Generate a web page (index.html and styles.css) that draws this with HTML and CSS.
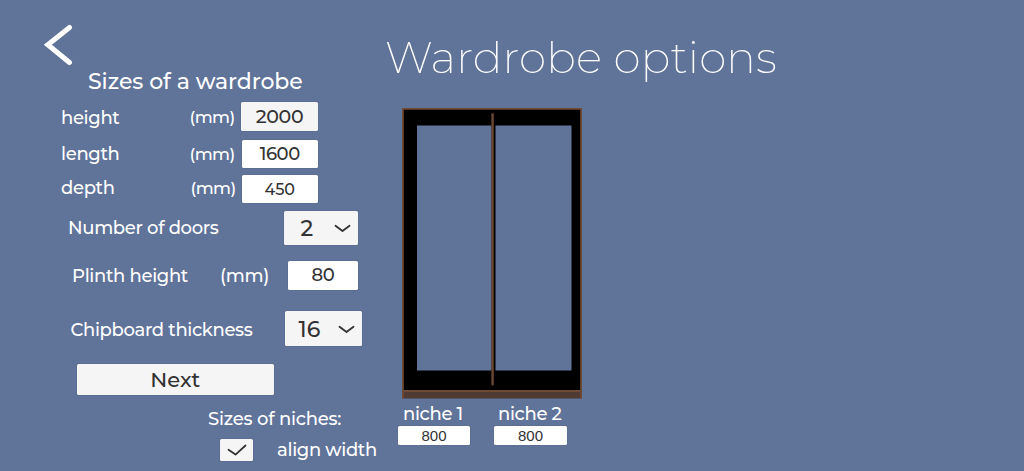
FILE: index.html
```html
<!DOCTYPE html>
<html lang="en">
<head>
    <meta charset="UTF-8">
    <meta name="viewport" content="width=device-width, initial-scale=1.0">
    <title>Wardrobe options</title>
    <link rel="stylesheet" href="styles.css">
</head>
<body>
    <form class="panel">
        <a href="#" class="back" aria-label="Back">
            <svg width="30" height="42" viewBox="0 0 30 42">
                <path d="M26.5 3.5 4.8 20.7 26.5 38.5" fill="none" stroke="#fff" stroke-width="5" stroke-linecap="round"/>
            </svg>
        </a>
        <h2>Sizes of a wardrobe</h2>

        <div class="row row-height">
            <label for="height">height</label>
            <span class="unit">(mm)</span>
            <input id="height" type="text" value="2000">
        </div>
        <div class="row row-length">
            <label for="length">length</label>
            <span class="unit">(mm)</span>
            <input id="length" type="text" value="1600">
        </div>
        <div class="row row-depth">
            <label for="depth">depth</label>
            <span class="unit">(mm)</span>
            <input id="depth" type="text" value="450">
        </div>
        <div class="row row-doors">
            <label>Number of doors</label>
            <button type="button" class="dropdown">
                <span>2</span>
                <svg width="17" height="9" viewBox="0 0 17 9"><path d="M1.5 1.8 8.5 7 15.5 1.8" /></svg>
            </button>
        </div>
        <div class="row row-plinth">
            <label for="plinth">Plinth height</label>
            <span class="unit">(mm)</span>
            <input id="plinth" type="text" value="80">
        </div>
        <div class="row row-chipboard">
            <label>Chipboard thickness</label>
            <button type="button" class="dropdown">
                <span>16</span>
                <svg width="17" height="9" viewBox="0 0 17 9"><path d="M1.5 1.8 8.5 7 15.5 1.8" /></svg>
            </button>
        </div>

        <button type="button" class="next">Next</button>

        <h3>Sizes of niches:</h3>
        <div class="align">
            <button type="button" class="checkbox" aria-label="align width">
                <svg width="20" height="12" viewBox="0 0 20 12"><path d="M1.5 5.8 8.5 10.6 18.5 1.5" /></svg>
            </button>
            <span>align width</span>
        </div>
    </form>

    <main>
        <h1>Wardrobe options</h1>
        <svg class="wardrobe" width="180" height="291" viewBox="0 0 180 291">
            <rect class="inside" x="0" y="0" width="180" height="284" />
            <!-- niches -->
            <rect class="niche-back" x="15" y="17.5" width="74.5" height="245" />
            <rect class="niche-back" x="93.5" y="17.5" width="76" height="245" />
            <!-- partition, plinth and outer boards -->
            <rect class="board" x="89.4" y="5.3" width="2.3" height="272" />
            <rect class="plinth" x="1" y="283" width="178" height="7.5" />
            <path class="board" d="M0 0H180V290.5H178.2V284H1.8V290.5H0ZM1.8 1.8V282H178.2V1.8Z" fill-rule="evenodd" />
        </svg>
        <div class="niches">
            <div class="niche">
                <label for="niche1">niche 1</label>
                <input id="niche1" type="text" value="800">
            </div>
            <div class="niche niche-wide">
                <label for="niche2">niche 2</label>
                <input id="niche2" type="text" value="800">
            </div>
        </div>
    </main>
</body>
</html>
```
FILE: styles.css
```css
* {
    margin: 0;
    padding: 0;
    box-sizing: border-box;
}

body {
    display: flex;
    height: 471px;
    overflow: hidden;
    background: #607399;
    color: #fff;
    font-family: 'Montserrat', 'Inter', sans-serif;
    font-size: 18px;
    font-weight: 500;
    letter-spacing: -0.33px;
}

.panel {
    width: 386px;
    display: flex;
    flex-direction: column;
}

.back {
    display: block;
    height: 42px;
    margin: 24px 0 0 43px;
}

h2 {
    height: 30px;
    margin-left: 88px;
    font-size: 22px;
    font-weight: 500;
    line-height: 32px;
    white-space: nowrap;
    letter-spacing: -0.05px;
}

h3 {
    height: 24px;
    margin: 11.5px 0 0 208px;
    font-size: 18px;
    font-weight: 500;
    line-height: 24px;
    letter-spacing: -0.22px;
}

.row {
    display: flex;
    align-items: center;
    flex-shrink: 0;
    white-space: nowrap;
}

input,
button {
    border: none;
    border-radius: 1.5px;
    background: #fff;
    color: #323232;
    font-family: inherit;
    font-weight: 500;
    text-align: center;
    box-shadow: 0 0 1px rgba(40, 40, 50, 0.6);
}

button {
    background: #f5f5f5;
}

button path {
    fill: none;
    stroke: #323232;
    stroke-width: 1.8;
    stroke-linecap: round;
    stroke-linejoin: round;
}

.row-height,
.row-length,
.row-depth {
    padding-left: 61px;
}

.row-height label,
.row-length label,
.row-depth label {
    width: 128.5px;
}

.row-height .unit,
.row-length .unit,
.row-depth .unit {
    width: 52.5px;
    font-size: 17px;
    letter-spacing: -0.55px;
}

.row-height {
    height: 29px;
    margin-top: 6px;
}

.row-height label {
    padding-top: 3px;
}

.row-height .unit {
    width: 51.5px;
    padding-top: 1px;
}

.row-height input {
    width: 77px;
    height: 29px;
    background: #f5f5f5;
    font-size: 19px;
    letter-spacing: -0.3px;
}

.row-length {
    height: 28px;
    margin-top: 8.5px;
}

.row-length input {
    width: 75.5px;
    height: 28px;
    font-size: 18px;
    letter-spacing: -0.4px;
}

.row-depth {
    height: 28px;
    margin-top: 7.5px;
}

.row-depth label,
.row-depth .unit {
    padding-bottom: 2px;
}

.row-depth .unit {
    padding-left: 1px;
}

.row-depth input {
    width: 75.5px;
    height: 28px;
    font-size: 16px;
}

.row-doors {
    height: 34px;
    margin-top: 8px;
    padding-left: 68px;
}

.row-doors label {
    width: 215.5px;
}

.row-plinth {
    height: 29px;
    margin-top: 15.5px;
    padding-left: 72px;
}

.row-plinth label {
    width: 148px;
    padding-top: 2px;
}

.row-plinth .unit {
    width: 68px;
    padding-top: 2px;
}

.row-plinth input {
    width: 70px;
    height: 29px;
    font-size: 18px;
    letter-spacing: -0.3px;
}

.row-chipboard {
    height: 35px;
    margin-top: 21.5px;
    padding-left: 70.5px;
}

.row-chipboard label {
    width: 214px;
    padding-top: 2px;
}

.dropdown {
    display: flex;
    align-items: center;
    justify-content: space-between;
    width: 74.5px;
    height: 34px;
    padding: 1px 7px 0 17px;
    font-size: 22px;
}

.row-chipboard .dropdown {
    width: 77.5px;
    height: 35px;
    padding-left: 14px;
}

.next {
    width: 196.5px;
    height: 31px;
    margin: 18px 0 0 77px;
    font-size: 21px;
    flex-shrink: 0;
}

.align {
    display: flex;
    align-items: center;
    height: 23px;
    margin: 7.5px 0 0 220px;
    white-space: nowrap;
}

.checkbox {
    display: flex;
    align-items: center;
    justify-content: center;
    width: 33px;
    height: 22px;
    margin-right: 24px;
}

main {
    display: flex;
    flex-direction: column;
}

h1 {
    height: 60px;
    margin-top: 27px;
    margin-left: -1px;
    font-size: 44px;
    font-weight: 200;
    line-height: 60px;
    white-space: nowrap;
    letter-spacing: 0.15px;
    will-change: transform;
}

.wardrobe {
    display: block;
    margin: 21px 0 0 16px;
    flex-shrink: 0;
}

.inside {
    fill: #000;
}

.niche-back {
    fill: #607399;
}

.board {
    fill: #6e4a35;
}

.plinth {
    fill: #4f3a34;
}

.niches {
    display: flex;
    gap: 24px;
    margin: 3px 0 0 12px;
}

.niche {
    display: flex;
    flex-direction: column;
    width: 72px;
}

.niche label {
    height: 24px;
    padding-left: 5px;
    line-height: 25.5px;
    white-space: nowrap;
}

.niche input {
    width: 100%;
    height: 19px;
    font-family: 'Liberation Sans', sans-serif;
    font-size: 15px;
    font-weight: 400;
}

.niche-wide {
    width: 73px;
}

.niche-wide label {
    padding-left: 4px;
}
```
